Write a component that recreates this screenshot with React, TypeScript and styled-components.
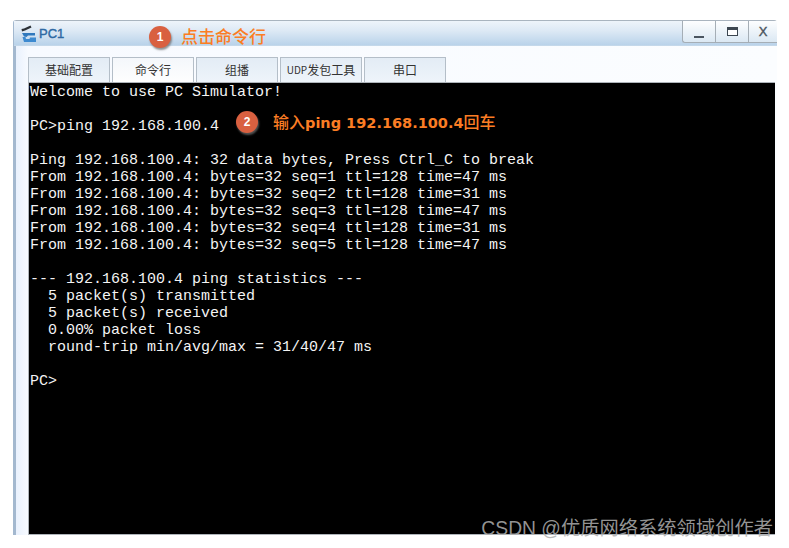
import React from "react";
import styled, { createGlobalStyle } from "styled-components";

const Global = createGlobalStyle`
  html, body { margin: 0; padding: 0; background: #fff; }
  #root { width: 789px; height: 548px; overflow: hidden; position: relative; }
`;

const Page = styled.div`
  width: 789px;
  height: 548px;
  padding: 20px 12px 13px 13px;
  box-sizing: border-box;
  background: #fff;
  display: flex;
`;

const Win = styled.div`
  flex: 1;
  display: flex;
  flex-direction: column;
  min-width: 0;
  border-radius: 3px 3px 0 0;
  border-top: 1px solid #a9b4bf;
  border-left: 3px solid #a3b8cf;
  background: #e9f1fd;
  position: relative;
`;

const TitleBar = styled.div`
  height: 24px;
  margin-left: -2px;
  display: flex;
  align-items: flex-start;
  background: linear-gradient(#eef4fa, #dde9f5 40%, #b9d3ea);
  border-bottom: 1px solid #c4d8ea;
`;

const TitleIcon = styled.svg`
  width: 16px;
  height: 18px;
  margin: 4px 0 0 7px;
  flex: none;
`;

const TitleText = styled.span`
  font: 13px/1 "Liberation Sans", sans-serif;
  -webkit-text-stroke: 0.4px #2d69a3;
  color: #2d69a3;
  margin: 6px 0 0 2px;
`;

const Spacer = styled.div`
  flex: 1;
`;

const WinControls = styled.div`
  display: flex;
  height: 21px;
  border-left: 1px solid #a5aeb6;
  border-bottom: 1px solid #a5aeb6;
  border-bottom-left-radius: 3px;
  background: linear-gradient(#fdfeff, #dbe8f3);
`;

const WinBtn = styled.div<{ $last?: boolean }>`
  width: ${(p) => (p.$last ? "28px" : "32px")};
  border-right: ${(p) => (p.$last ? "none" : "1px solid #a5aeb6")};
  display: flex;
  align-items: center;
  justify-content: center;
`;

const MinGlyph = styled.div`
  width: 10px;
  height: 2px;
  background: #4a5560;
  margin-top: 10px;
`;

const MaxGlyph = styled.div`
  width: 11px;
  height: 9px;
  box-sizing: border-box;
  border: 1px solid #3c4650;
  border-top-width: 3px;
  background: #fff;
  margin-top: -1px;
`;

const CloseGlyph = styled.span`
  font: 13px/1 "Liberation Sans", sans-serif;
  -webkit-text-stroke: 0.4px #49535d;
  color: #49535d;
`;

const Body = styled.div`
  flex: 1;
  min-height: 0;
  display: flex;
  flex-direction: column;
  padding: 11px 2px 0 12px;
  background: linear-gradient(90deg, #e9f1fd 0, #f7faff 12px, #fbfdff 100%);
`;

const TabRow = styled.div`
  display: flex;
  gap: 2px;
  height: 25px;
  flex: none;
`;

const Tab = styled.div<{ $active?: boolean }>`
  width: 82px;
  box-sizing: border-box;
  padding-bottom: 1px;
  border: 1px solid #b4bec8;
  border-bottom: none;
  background: ${(p) =>
    p.$active ? "linear-gradient(#f4f7fb, #fefefe)" : "linear-gradient(#e3ecf5, #eef4fa)"};
  display: flex;
  align-items: center;
  justify-content: center;
  font: 12px/1 "Noto Sans CJK SC", "Liberation Sans", sans-serif;
  color: #333;
  white-space: nowrap;
`;

const TabLatin = styled.span`
  font-size: 10px;
`;

const Terminal = styled.div`
  flex: 1;
  min-height: 0;
  box-sizing: border-box;
  background: #000;
  border-top: 1px solid #aeb4ba;
  border-left: 1px solid #aeb4ba;
  border-bottom: 1px solid #aeb4ba;
  padding: 1px 0 0 1px;
  position: relative;
  overflow: hidden;
`;

const Line = styled.div`
  width: fit-content;
  height: 17px;
  font: 15px/17px "Liberation Mono", monospace;
  color: #f4f4f4;
  white-space: pre;
`;

const Badge = styled.div<{ $x: number; $y: number }>`
  position: absolute;
  left: ${(p) => p.$x}px;
  top: ${(p) => p.$y}px;
  width: 22px;
  height: 22px;
  border-radius: 50%;
  background: #d96040;
  box-shadow: 1px 2px 2px rgba(110, 110, 110, 0.75);
  color: #fff;
  font: bold 12px/22px "Liberation Sans", sans-serif;
  text-align: center;
`;

const Note = styled.div<{ $x: number; $y: number; $size: number }>`
  position: absolute;
  left: ${(p) => p.$x}px;
  top: ${(p) => p.$y}px;
  font: 500 ${(p) => p.$size}px/20px "Noto Sans CJK SC", "DejaVu Sans", sans-serif;
  color: #fb7d24;
  white-space: nowrap;
`;

const NoteLatin = styled.span`
  font-family: "DejaVu Sans", sans-serif;
  font-weight: bold;
  font-size: 14.5px;
`;

const Watermark = styled.div`
  position: absolute;
  right: 16px;
  top: 518px;
  font: 19.3px/22px "Liberation Sans", "Noto Sans CJK SC", sans-serif;
  color: rgba(175, 175, 175, 0.85);
  white-space: nowrap;
`;

const lines = [
  "Welcome to use PC Simulator!",
  "",
  "PC>ping 192.168.100.4",
  "",
  "Ping 192.168.100.4: 32 data bytes, Press Ctrl_C to break",
  "From 192.168.100.4: bytes=32 seq=1 ttl=128 time=47 ms",
  "From 192.168.100.4: bytes=32 seq=2 ttl=128 time=31 ms",
  "From 192.168.100.4: bytes=32 seq=3 ttl=128 time=47 ms",
  "From 192.168.100.4: bytes=32 seq=4 ttl=128 time=31 ms",
  "From 192.168.100.4: bytes=32 seq=5 ttl=128 time=47 ms",
  "",
  "--- 192.168.100.4 ping statistics ---",
  "  5 packet(s) transmitted",
  "  5 packet(s) received",
  "  0.00% packet loss",
  "  round-trip min/avg/max = 31/40/47 ms",
  "",
  "PC>",
];

export default function App() {
  return (
    <>
      <Global />
      <Page>
        <Win>
          <TitleBar>
            <TitleIcon viewBox="0 0 16 18">
              <path d="M0.5 4 L3 3.5 L9.5 0.5 L10.5 2.5 L4 5.5 L1 6.5 Z" fill="#2b3035" />
              <path d="M1 8 H14 V10.5 H7 L5.5 12 L3 11.5 Z" fill="#2f78bd" />
              <path d="M1.5 12 L3 17 H15 V12.5 H9 L8.5 14 H5 L4.5 12 Z" fill="#3d8ad0" />
            </TitleIcon>
            <TitleText>PC1</TitleText>
            <Spacer />
            <WinControls>
              <WinBtn><MinGlyph /></WinBtn>
              <WinBtn><MaxGlyph /></WinBtn>
              <WinBtn $last><CloseGlyph>X</CloseGlyph></WinBtn>
            </WinControls>
          </TitleBar>
          <Body>
            <TabRow>
              <Tab>基础配置</Tab>
              <Tab $active>命令行</Tab>
              <Tab>组播</Tab>
              <Tab><TabLatin>UDP</TabLatin>发包工具</Tab>
              <Tab>串口</Tab>
            </TabRow>
            <Terminal>
              {lines.map((l, i) => (
                <Line key={i}>{l}</Line>
              ))}
            </Terminal>
          </Body>
        </Win>
      </Page>
      <Badge $x={149} $y={26}>1</Badge>
      <Note $x={181} $y={26} $size={17}>点击命令行</Note>
      <Badge $x={236} $y={111}>2</Badge>
      <Note $x={273} $y={111} $size={16}>输入<NoteLatin>ping 192.168.100.4</NoteLatin>回车</Note>
      <Watermark>CSDN @优质网络系统领域创作者</Watermark>
    </>
  );
}
